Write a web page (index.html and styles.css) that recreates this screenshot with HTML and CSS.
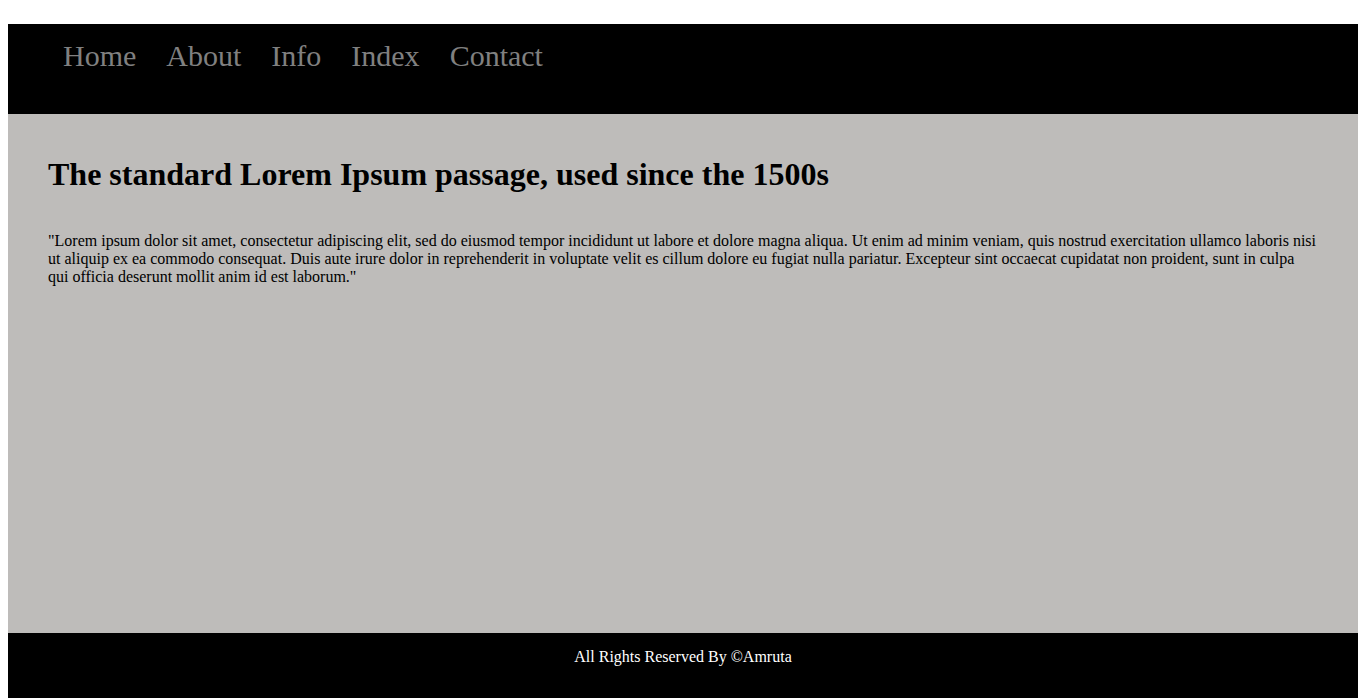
FILE: index.html
```html
<!DOCTYPE html>
<html lang="en">
<head>
<meta charset="utf-8">
<title>Lorem Ipsum</title>
<link rel="stylesheet" href="styles.css">
</head>
<body>
<header class="site-header">
  <nav>
    <ul class="nav-list">
      <li><a href="#">Home</a></li>
      <li><a href="#">About</a></li>
      <li><a href="#">Info</a></li>
      <li><a href="#">Index</a></li>
      <li><a href="#">Contact</a></li>
    </ul>
  </nav>
</header>
<main class="content">
  <h1 class="title">The standard Lorem Ipsum passage, used since the 1500s</h1>
  <p class="passage">"Lorem ipsum dolor sit amet, consectetur adipiscing elit, sed do eiusmod tempor incididunt ut labore et dolore magna aliqua. Ut enim ad minim veniam, quis nostrud exercitation ullamco laboris nisi ut aliquip ex ea commodo consequat. Duis aute irure dolor in reprehenderit in voluptate velit es cillum dolore eu fugiat nulla pariatur. Excepteur sint occaecat cupidatat non proident, sunt in culpa qui officia deserunt mollit anim id est laborum."</p>
</main>
<footer class="site-footer">
  <p>All Rights Reserved By &copy;Amruta</p>
</footer>
</body>
</html>
```
FILE: styles.css
```css
body {
  margin: 8px;
  font-family: "Liberation Serif", "Times New Roman", serif;
}

.site-header {
  margin-top: 16px;
  background: #000;
  height: 90px;
  box-sizing: border-box;
  padding-top: 15px;
}

.nav-list {
  list-style: none;
  margin: 0;
  padding: 0 0 0 40px;
  display: flex;
}

.nav-list a {
  display: block;
  padding: 0 15px;
  font-size: 30px;
  color: #808080;
  text-decoration: none;
}

.content {
  background: #bebcba;
  height: 519px;
  box-sizing: border-box;
  padding: 42px 40px 0;
}

.title {
  margin: 0;
  font-size: 32px;
  font-weight: bold;
  color: #000;
}

.passage {
  margin: 39px 0 0;
  font-size: 16px;
  color: #000;
}

.site-footer {
  background: #000;
  color: #fff;
  text-align: center;
  height: 72px;
  box-sizing: border-box;
  padding-top: 15px;
}

.site-footer p {
  margin: 0;
  font-size: 16px;
}
```
